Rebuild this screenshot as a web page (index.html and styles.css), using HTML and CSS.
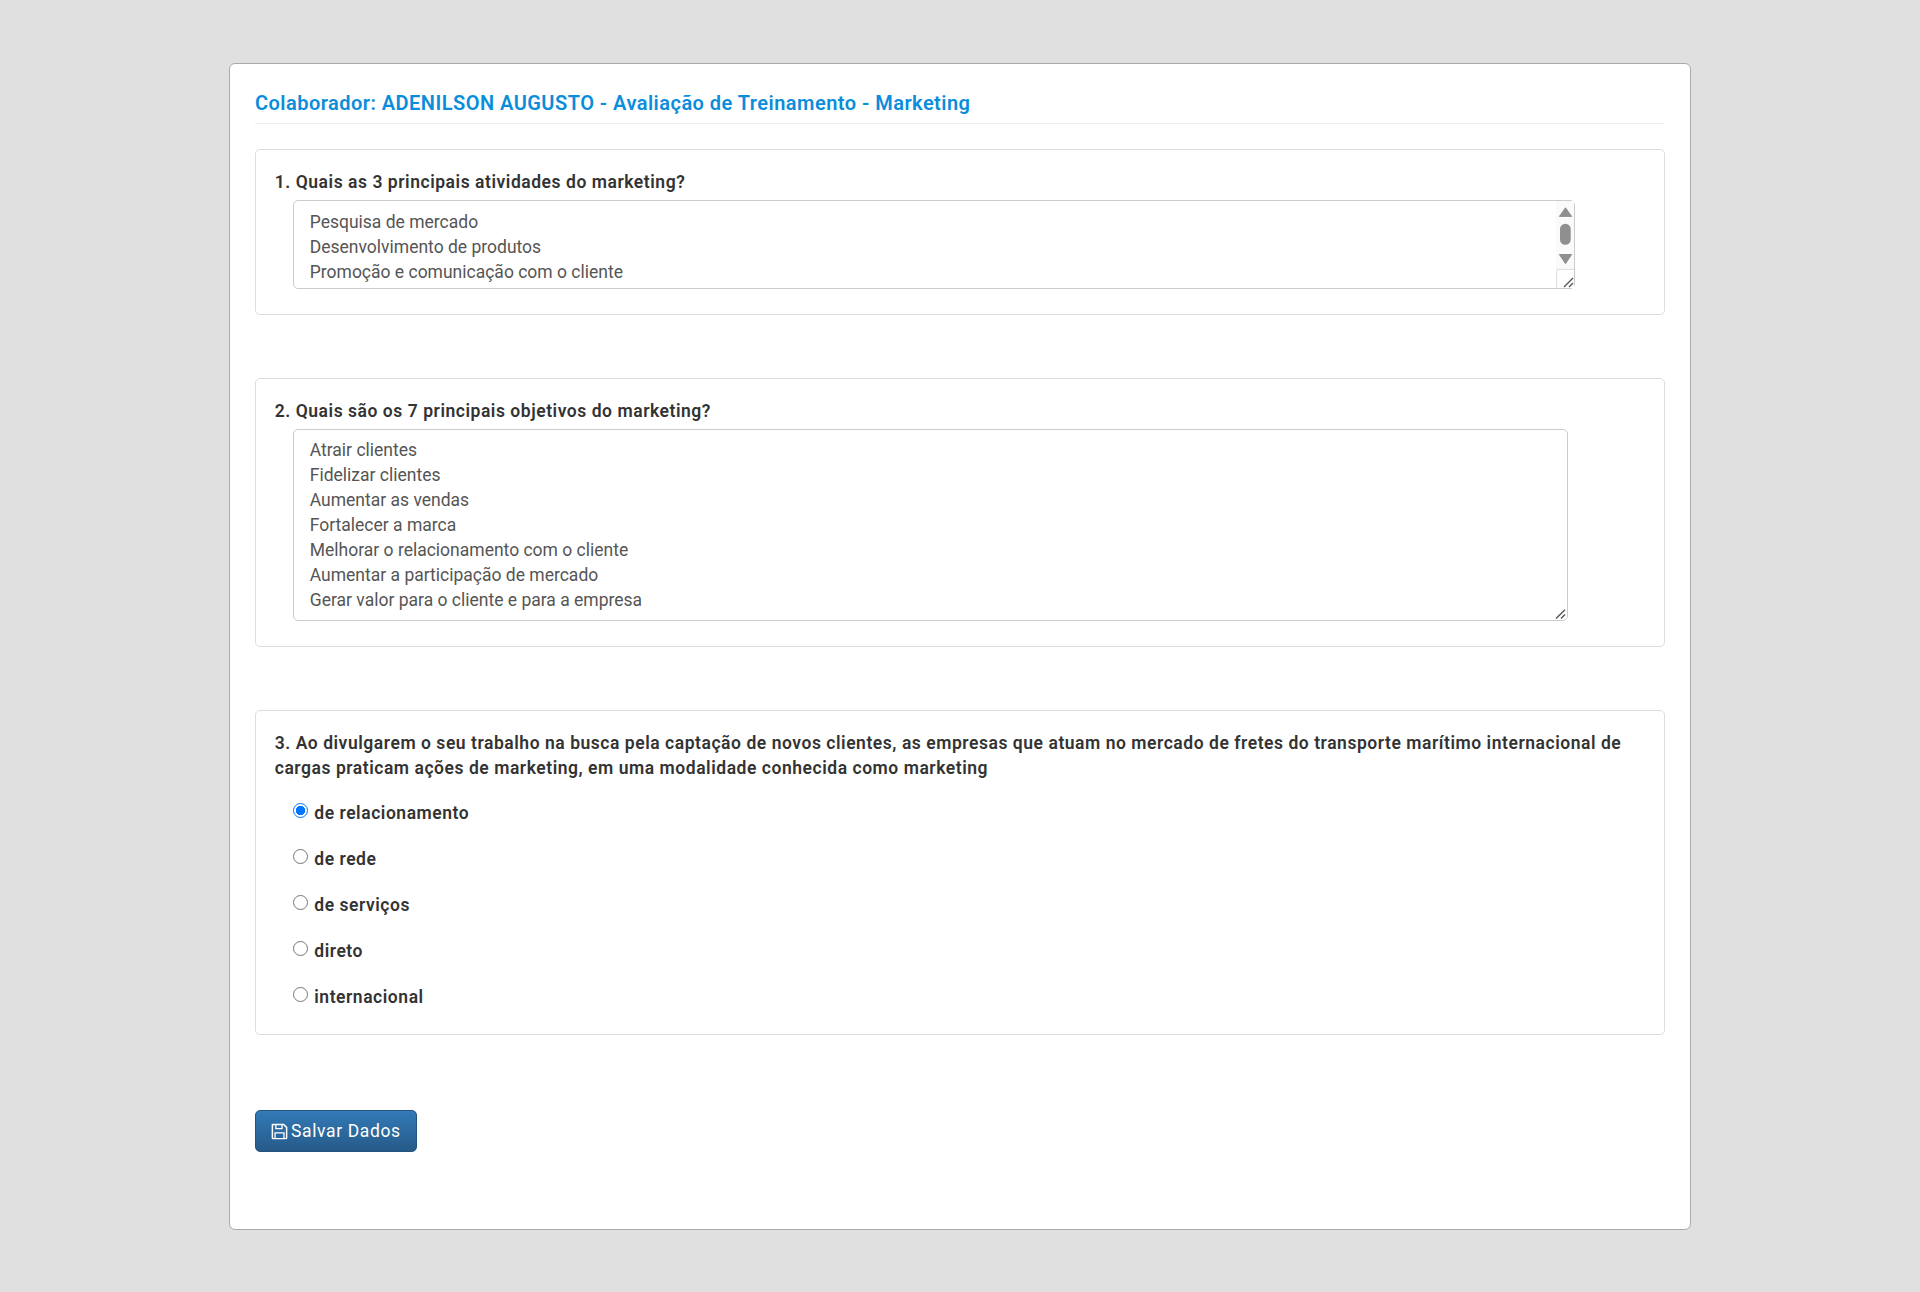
FILE: index.html
```html
<!DOCTYPE html>
<html lang="pt-BR">
<head>
<meta charset="utf-8">
<title>Avaliação de Treinamento</title>
<link rel="stylesheet" href="styles.css">
</head>
<body>
<main class="panel">
  <h1 class="title">Colaborador: ADENILSON AUGUSTO - Avaliação de Treinamento - Marketing</h1>
  <section class="card">
    <p class="question">1. Quais as 3 principais atividades do marketing?</p>
    <div class="answer-box">
      <textarea class="answer answer-short" rows="3">Pesquisa de mercado
Desenvolvimento de produtos
Promoção e comunicação com o cliente</textarea>
      <svg class="scrollbar" viewBox="0 0 18 87" aria-hidden="true">
        <rect width="18" height="87" fill="#fafafa"/>
        <path fill="#8f8f8f" stroke="#8f8f8f" stroke-width="1" stroke-linejoin="round" d="M9.5 6.8 15.6 15.4H3.4ZM3.4 53.5H15.6L9.5 62.7Z"/>
        <rect x="4" y="22.7" width="10.7" height="21" rx="5.3" fill="#8f8f8f"/>
        <rect y="68" width="18" height="19" fill="#fff"/>
        <path fill="none" stroke="#ddd" stroke-width="1" d="M.7 87V68.4H18"/>
        <path fill="none" stroke="#555" stroke-width="1.4" d="M8 86 17 77M13 86 17 82"/>
      </svg>
    </div>
  </section>
  <section class="card">
    <p class="question">2. Quais são os 7 principais objetivos do marketing?</p>
    <textarea class="answer answer-long" rows="7">Atrair clientes
Fidelizar clientes
Aumentar as vendas
Fortalecer a marca
Melhorar o relacionamento com o cliente
Aumentar a participação de mercado
Gerar valor para o cliente e para a empresa</textarea>
  </section>
  <section class="card">
    <p class="question question-wide">3. Ao divulgarem o seu trabalho na busca pela captação de novos clientes, as empresas que atuam no mercado de fretes do transporte marítimo internacional de cargas praticam ações de marketing, em uma modalidade conhecida como marketing</p>
    <div class="options">
      <label class="option"><input type="radio" name="q3" checked><span>de relacionamento</span></label>
      <label class="option"><input type="radio" name="q3"><span>de rede</span></label>
      <label class="option"><input type="radio" name="q3"><span>de serviços</span></label>
      <label class="option"><input type="radio" name="q3"><span>direto</span></label>
      <label class="option"><input type="radio" name="q3"><span>internacional</span></label>
    </div>
  </section>
  <button class="save" type="button">
    <svg class="save-icon" viewBox="0 0 16 16" aria-hidden="true"><path fill="#fff" fill-rule="evenodd" d="M1.6 0.6h10.6L15.4 3.8V14a1.4 1.4 0 0 1-1.4 1.4H2A1.4 1.4 0 0 1 .6 14V1.6a1 1 0 0 1 1-1ZM2 2v12h1.2V8.6h9.6V14H14V4.4L11.6 2H11v3.8H4V2ZM5.2 2v2.6h4.6V2ZM4.4 9.8V14h7.2V9.8Z"/></svg>
    Salvar Dados
  </button>
</main>
</body>
</html>
```
FILE: styles.css
```css
* { box-sizing: border-box; }
html, body { margin: 0; }
body {
  background: #e0e0e0;
  padding: 63px 0;
  font-family: Roboto, "Liberation Sans", sans-serif;
  font-size: 17.5px;
  line-height: 25px;
  letter-spacing: .54px;
  color: #333;
}
.panel {
  width: 1462px;
  height: 1167px;
  margin: 0 auto;
  padding: 0 25px;
  background: #fff;
  border: 1.25px solid #aaa;
  border-radius: 6px;
}
.title {
  margin: 25px 0 25px;
  padding-bottom: 5px;
  border-bottom: 1.25px solid #eee;
  font-size: 20px;
  font-weight: 600;
  line-height: 29px;
  letter-spacing: .47px;
  color: #0a8ddb;
}
.card {
  margin-bottom: 63px;
  padding: 20px 18.75px;
  border: 1.25px solid #ddd;
  border-radius: 5px;
}
.question {
  margin: 0 0 5px;
  font-weight: 600;
}
.answer-box {
  position: relative;
  width: 1282px;
  margin: 0 0 5px 18px;
}
.answer {
  display: block;
  margin: 0 0 5px 18px;
  padding: 7.5px 16px;
  border: 1.25px solid #ccc;
  border-radius: 5px;
  font: 400 17.5px/25px Roboto, "Liberation Sans", sans-serif;
  letter-spacing: 0;
  color: #555;
  background: #fff;
  outline: none;
}
.answer-short {
  width: 100%;
  height: 89px;
  margin: 0;
  padding-top: 8.5px;
  resize: none;
  overflow: hidden;
}
.answer-long { width: 1275px; height: 192px; }
.answer-long::-webkit-resizer {
  background: url("data:image/svg+xml,%3Csvg xmlns='http://www.w3.org/2000/svg' viewBox='0 0 11 10'%3E%3Cpath fill='none' stroke='%23555' stroke-width='1.4' d='M1 9.5 10 .8M6 9.5 10 5.6'/%3E%3C/svg%3E") no-repeat right 1px bottom 1px / 11px 10px;
}
.scrollbar {
  position: absolute;
  top: 1px;
  right: 1px;
  width: 18px;
  height: 87px;
  pointer-events: none;
}
.question-wide { margin-bottom: 20px; }
.options { display: flex; flex-direction: column; gap: 21px; margin: .5px 0 3.5px; }
.option {
  display: flex;
  align-items: flex-start;
  gap: 6px;
  margin-left: 18px;
  font-weight: 600;
}
.option input {
  appearance: none;
  flex: none;
  width: 15.5px;
  height: 15.5px;
  margin: 1.5px 0 0;
  border: 1.25px solid #767676;
  border-radius: 50%;
  background: #fff;
}
.option input:checked {
  border-color: #0075ff;
  background: radial-gradient(circle, #0075ff 0 4.4px, #fff 5px);
}
.save {
  display: flex;
  align-items: center;
  gap: 3px;
  width: 162px;
  height: 42px;
  margin-top: 75px;
  padding: 1px 15px 0;
  border: 1.25px solid #245580;
  border-radius: 5px;
  background: linear-gradient(#337ab7, #265a88);
  font: 400 17.5px/25px Roboto, "Liberation Sans", sans-serif;
  letter-spacing: .625px;
  color: #fff;
}
.save-icon { width: 17px; height: 17px; flex: none; }
```
